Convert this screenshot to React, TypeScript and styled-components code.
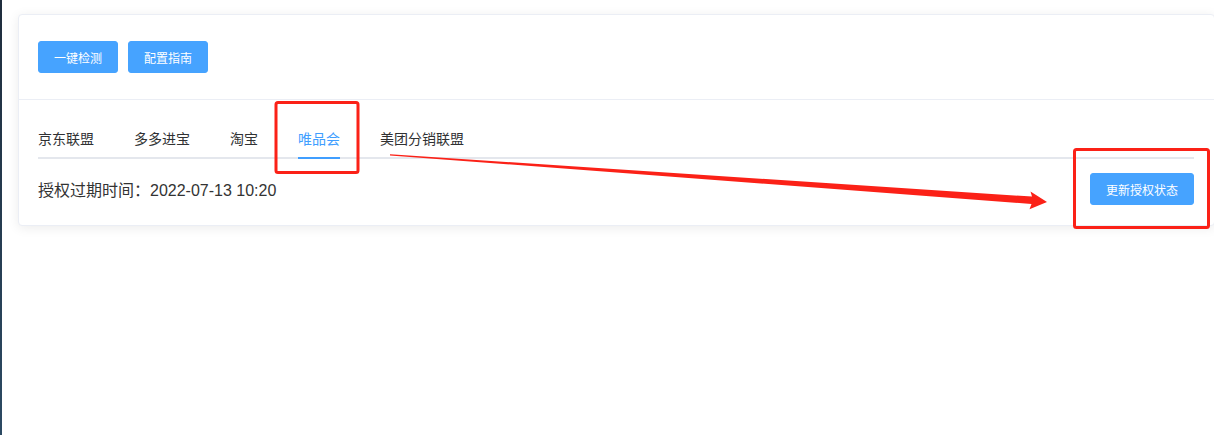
import React from "react";
import styled, { createGlobalStyle, css } from "styled-components";

const tabs = ["京东联盟", "多多进宝", "淘宝", "唯品会", "美团分销联盟"];
const activeTab = "唯品会";

const App: React.FC = () => {
  return (
    <>
      <GlobalStyle />
      <Page>
        <Sidebar />
        <Main>
          <Card>
            <CardHeader>
              <Button>一键检测</Button>
              <Button>配置指南</Button>
            </CardHeader>
            <CardBody>
              <TabBar>
                {tabs.map((t) => (
                  <TabItem key={t}>
                    <TabLabel $active={t === activeTab}>{t}</TabLabel>
                  </TabItem>
                ))}
              </TabBar>
              <StatusRow>
                <ExpireText>授权过期时间：2022-07-13 10:20</ExpireText>
                <Button>更新授权状态</Button>
              </StatusRow>
            </CardBody>
          </Card>
        </Main>
        <Markup viewBox="0 0 1214 435">
          <rect x="276" y="102.5" width="82" height="70" rx="2" />
          <rect x="1074.5" y="149.5" width="134" height="78" rx="2" />
          <polygon points="390,154.2 1032,196.6 1030.5,191.6 1047,202 1029.5,209.2 1031.5,204 390,155.4" />
        </Markup>
      </Page>
    </>
  );
};

const GlobalStyle = createGlobalStyle`
  body {
    margin: 0;
    background: #fff;
    font-family: "Liberation Sans", "Noto Sans CJK SC", sans-serif;
  }
`;

const Page = styled.div`
  position: relative;
  display: flex;
  width: 1214px;
  height: 435px;
  overflow: hidden;
`;

const Sidebar = styled.div`
  width: 2px;
  flex-shrink: 0;
  background: linear-gradient(180deg, #1f2d3d, #2c4a63);
`;

const Main = styled.div`
  flex: 1;
  padding: 14px 0 0 16px;
`;

const Card = styled.div`
  margin-right: -1px;
  background: #fff;
  border: 1px solid #ebeef5;
  border-radius: 4px;
  box-shadow: 0 2px 12px 0 rgba(0, 0, 0, 0.08);
`;

const CardHeader = styled.div`
  display: flex;
  gap: 10px;
  padding: 26px 19px;
  border-bottom: 1px solid #ebeef5;
`;

const CardBody = styled.div`
  padding: 19px 20px 20px 19px;
`;

const Button = styled.button`
  height: 32px;
  padding: 0 15px;
  border: 1px solid #46a3ff;
  border-radius: 3px;
  background: #46a3ff;
  color: #fff;
  font-family: inherit;
  font-size: 12px;
  cursor: pointer;
`;

const TabBar = styled.div`
  display: flex;
  box-shadow: inset 0 -2px 0 #e4e7ed;
`;

const TabItem = styled.div`
  height: 40px;
  padding: 0 20px;

  &:first-child {
    padding-left: 0;
  }
  &:last-child {
    padding-right: 0;
  }
`;

const TabLabel = styled.span<{ $active?: boolean }>`
  display: inline-block;
  height: 40px;
  line-height: 40px;
  font-size: 14px;
  color: #303133;

  ${(p) =>
    p.$active &&
    css`
      color: #409eff;
      box-shadow: inset 0 -2px 0 #409eff;
    `}
`;

const StatusRow = styled.div`
  display: flex;
  align-items: center;
  justify-content: space-between;
  margin-top: 14px;
`;

const ExpireText = styled.span`
  font-size: 16px;
  color: #333;
`;

const Markup = styled.svg`
  position: absolute;
  left: 0;
  top: 0;
  width: 1214px;
  height: 435px;
  pointer-events: none;

  rect {
    fill: none;
    stroke: #fb2117;
    stroke-width: 3;
  }
  polygon {
    fill: #fb2117;
  }
`;

export default App;
